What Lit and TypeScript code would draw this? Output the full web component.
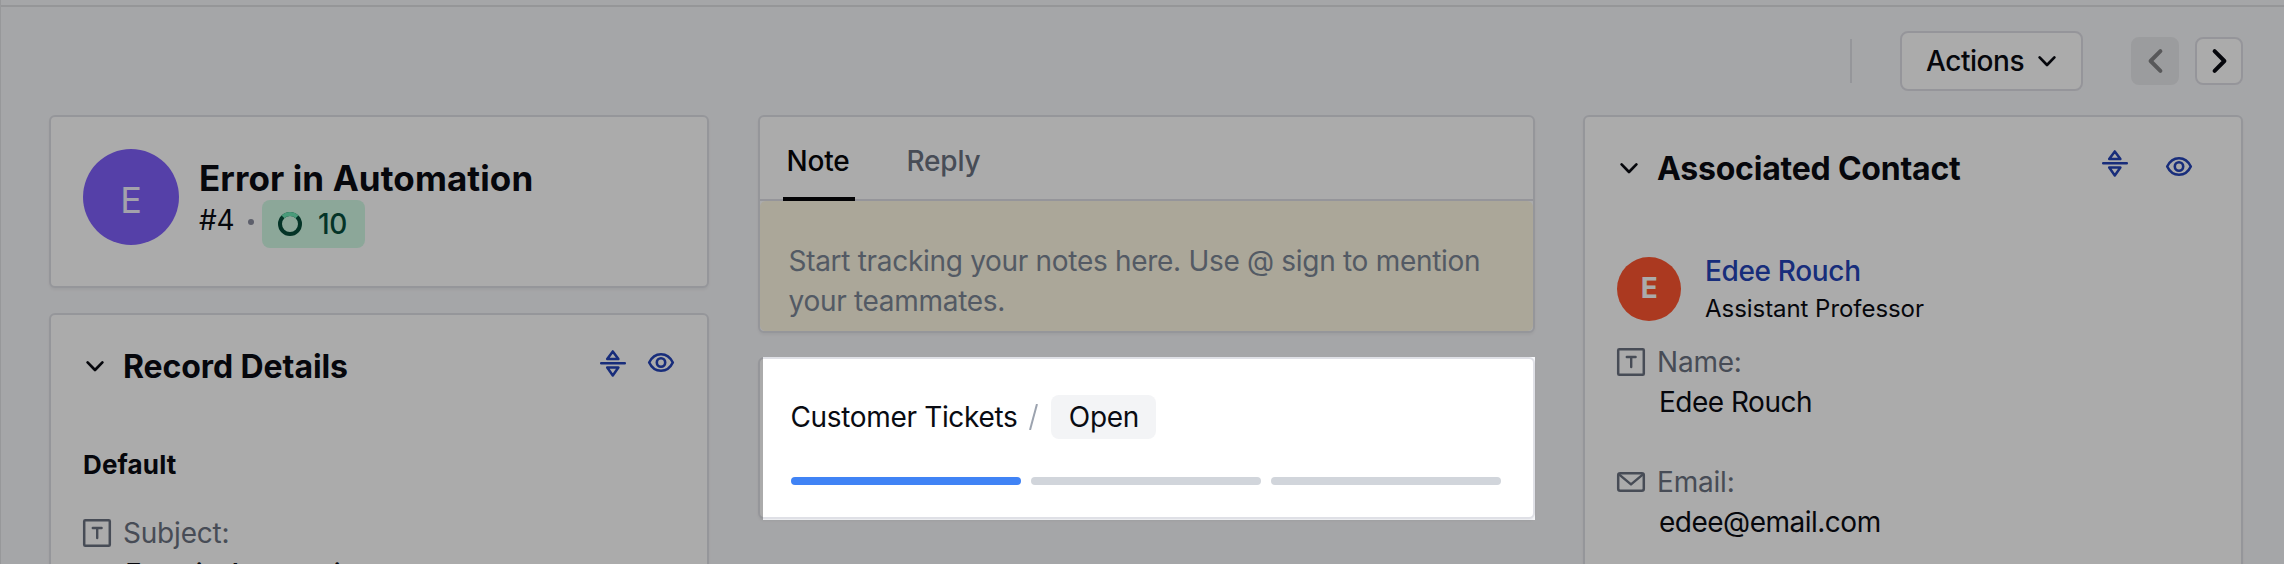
import { LitElement, html, css, svg } from "lit";
import { customElement, property } from "lit/decorators.js";

@customElement("ui-icon")
class UiIcon extends LitElement {
  @property() name = "";
  static styles = css`
    :host { display: block; flex: none; }
    svg { display: block; overflow: visible; fill: none; stroke: currentColor; stroke-linecap: round; stroke-linejoin: round; }
    .butt { stroke-linecap: butt; }
  `;
  render() {
    switch (this.name) {
      case "chevron":
        return html`<svg width="18" height="11" viewBox="0 0 18 11" stroke-width="2.7">${svg`<path d="M1.6 1.4 9 9l7.4-7.6"/>`}</svg>`;
      case "prev":
        return html`<svg width="15" height="24" viewBox="0 0 15 24" stroke-width="4">${svg`<path d="M12.4 2.2 2.6 12l9.8 9.8"/>`}</svg>`;
      case "next":
        return html`<svg width="15" height="24" viewBox="0 0 15 24" stroke-width="4">${svg`<path d="M2.6 2.2 12.4 12l-9.8 9.8"/>`}</svg>`;
      case "expand":
        return html`<svg width="26" height="27" viewBox="0 0 26 27" stroke-width="2.5">${svg`<path d="M1.2 13.3h23.6M12.8 1.4 18.4 9.1H7.2zM12.8 25.4 18.4 17.6H7.2z"/>`}</svg>`;
      case "eye":
        return html`<svg width="26" height="19" viewBox="0 0 26 19" stroke-width="2.6">${svg`<path d="M1.2 9.5C3.8 4 8.2 1.2 13 1.2S22.2 4 24.8 9.5C22.2 15 17.8 17.8 13 17.8S3.8 15 1.2 9.5z"/><circle cx="13" cy="9.5" r="4.2"/>`}</svg>`;
      case "text":
        return html`<svg width="28" height="28" viewBox="0 0 28 28" stroke-width="2.5"><rect x="1.2" y="1.2" width="25.6" height="25.6" rx="1"/><path d="M9.8 9h8.8M14.2 9v10" stroke-width="2.4"/></svg>`;
      case "mail":
        return html`<svg width="28" height="20" viewBox="0 0 28 20" stroke-width="2.5"><rect x="1.2" y="1.2" width="25.6" height="17.6" rx="2"/><path d="M2 2.4 14 12.4 26 2.4"/></svg>`;
      case "ring":
        return html`<svg class="butt" width="24" height="24" viewBox="0 0 24 24" stroke-width="4"><circle cx="12" cy="12" r="10" stroke="#064e3b"/><path d="M5 4.9A10 10 0 0 1 19 4.9" stroke="#6ee7b7"/></svg>`;
    }
    return html``;
  }
}

@customElement("app-root")
class AppRoot extends LitElement {
  static styles = css`
    :host { display: block; width: 2284px; height: 564px; overflow: hidden; position: relative; background: #f7f8fb;
      font: 400 28px/40px Inter, sans-serif; letter-spacing: -.34px; color: #090b12; }
    * { box-sizing: border-box; }
    .page { height: 564px; border-left: 1px solid #e2e3e6; overflow: hidden; }
    .strip { height: 7px; border-bottom: 2px solid #dfe0e3; }
    .toolbar { height: 108px; padding: 24px 41px 0 0; display: flex; justify-content: flex-end; align-items: flex-start; }
    .rule { width: 2px; height: 44px; margin: 8px 48px 0 0; background: #dfe0e6; }
    .btn { border: 2px solid #dfdfe6; border-radius: 8px; background: #fff; display: flex; align-items: center; }
    .actions { width: 183px; height: 60px; padding-left: 24px; gap: 14px; font-weight: 500; letter-spacing: -.45px; margin-right: 48px; }
    .actions ui-icon { padding-top: 1px; }
    .nav { width: 48px; height: 48px; margin-top: 6px; justify-content: center; }
    .off { background: #e8e9ec; border-color: #e8e9ec; color: #838486; margin-right: 16px; }
    .cols { display: grid; grid-template-columns: 660px 777px 660px; column-gap: 48.5px; padding-left: 48px; align-items: start; }
    .col { display: flex; flex-direction: column; gap: 24px; }
    .card { background: #fff; border: 2px solid #dfe0e6; border-radius: 6px; box-shadow: 0 2px 3px rgba(0, 0, 0, .05); }
    .summary { height: 173px; padding: 32px; display: flex; gap: 20px; }
    .avatar { flex: none; border-radius: 50%; display: flex; align-items: center; justify-content: center; color: #fff; }
    .big { width: 96px; height: 96px; background: #7f60fb; font-size: 36px; padding-top: 5px; color: #f4f2ff; }
    .title { font-size: 35px; font-weight: 700; letter-spacing: .1px; line-height: 40px; padding-top: 9px; height: 51px; white-space: nowrap; }
    .meta { display: flex; height: 48px; }
    .num { width: 49px; }
    .dot { width: 6px; height: 6px; border-radius: 3px; background: #8b8ea0; margin: 19px 8px 0 0; }
    .badge { width: 103px; height: 48px; border-radius: 8px; background: #d1fae5; color: #064e3b; font-weight: 500; display: flex; align-items: center; gap: 16px; padding-left: 16px; }
    .details { height: 420px; padding: 26px 32px; margin-top: 1px; }
    .head { display: flex; align-items: flex-start; height: 44px; }
    .head h2 { margin: 0; font-size: 32px; line-height: 52px; font-weight: 700; letter-spacing: -.22px; flex: 1; white-space: nowrap; }
    .details .head h2 { letter-spacing: -.08px; }
    .head .chev { margin: 20px 19px 0 3px; }
    .group { font-size: 26px; font-weight: 700; letter-spacing: .15px; line-height: 40px; margin-top: 60px; }
    .label { display: flex; align-items: center; gap: 12px; color: #6b7280; height: 40px; letter-spacing: -.2px; }
    .composer { height: 218px; overflow: hidden; }
    .tabs { height: 84px; display: flex; padding: 24px 0 0 23px; gap: 48px; font-weight: 500; letter-spacing: -.2px; border-bottom: 2px solid #dfdfe6; color: #6b7280; line-height: 40px; }
    .tab { height: 60px; padding: 0 4px; }
    .on { color: #06070a; border-bottom: 4px solid #06070a; width: 72px; }
    .editor { height: 130px; background: #fff9e4; border-radius: 6px; padding: 40px 29px 0; color: #7c8796; white-space: nowrap; letter-spacing: -.3px; }
    .stage { height: 162px; padding: 36px 32px 0 31px; }
    .crumb { display: flex; align-items: center; height: 44px; margin-bottom: 38px; }
    .slash { margin: 0 13px 0 12px; width: 9px; height: 26px; }
    .pill { background: #f3f4f6; border-radius: 8px; height: 44px; line-height: 44px; width: 105px; text-align: center; }
    .bars { display: grid; grid-template-columns: repeat(3, 230px); gap: 10px; }
    .bar { height: 8px; border-radius: 4px; background: #d1d5db; }
    .done { background: #4083f5; }
    .contact { height: 520px; padding: 26px 32px; }
    .person { display: flex; gap: 24px; margin-top: 70px; height: 85px; }
    .small { width: 64px; height: 64px; background: #ff5630; font-weight: 700; padding-bottom: 3px; }
    .name { color: #2443b8; font-weight: 500; line-height: 36px; margin-top: -4px; }
    .role { font-size: 24px; line-height: 40px; letter-spacing: -.05px; }
    .value { padding: 0 0 0 42px; height: 80px; letter-spacing: -.5px; }
    .details .value { padding-top: 1px; letter-spacing: -.4px; }
    .blue { color: #2443b8; }
    .x1 { margin: 9px 22px 0 0; }
    .e1 { margin: 12px 1px 0 0; }
    .x2 { margin: 7px 38px 0 0; }
    .e2 { margin: 14px 17px 0 0; }
    .subject { margin-top: 28px; }
    .spot { position: absolute; left: 763px; top: 357px; width: 772px; height: 163px; box-shadow: 0 0 0 2400px rgba(0, 0, 0, .33); }
  `;
  render() {
    return html`
      <div class="page">
        <div class="strip"></div>
        <div class="toolbar">
          <div class="rule"></div>
          <div class="btn actions"><span>Actions</span><ui-icon name="chevron"></ui-icon></div>
          <div class="btn nav off"><ui-icon name="prev"></ui-icon></div>
          <div class="btn nav"><ui-icon name="next"></ui-icon></div>
        </div>
        <div class="cols">
          <div class="col">
            <div class="card summary">
              <div class="avatar big">E</div>
              <div>
                <div class="title">Error in Automation</div>
                <div class="meta"><span class="num">#4</span><span class="dot"></span>
                  <div class="badge"><ui-icon name="ring"></ui-icon>10</div></div>
              </div>
            </div>
            <div class="card details">
              <div class="head"><ui-icon class="chev" name="chevron"></ui-icon><h2>Record Details</h2>
                <ui-icon class="blue x1" name="expand"></ui-icon>
                <ui-icon class="blue e1" name="eye"></ui-icon></div>
              <div class="group">Default</div>
              <div class="label subject"><ui-icon name="text"></ui-icon><span>Subject:</span></div>
              <div class="value">Error in Automation</div>
            </div>
          </div>
          <div class="col">
            <div class="card composer">
              <div class="tabs"><div class="tab on">Note</div><div class="tab">Reply</div></div>
              <div class="editor">Start tracking your notes here. Use @ sign to mention<br>your teammates.</div>
            </div>
            <div class="card stage">
              <div class="crumb"><span>Customer Tickets</span>
                <svg class="slash" viewBox="0 0 9 26"><path d="M8 0 1 26" stroke="#9ca3af" stroke-width="2"/></svg>
                <span class="pill">Open</span></div>
              <div class="bars"><div class="bar done"></div><div class="bar"></div><div class="bar"></div></div>
            </div>
          </div>
          <div class="card contact">
            <div class="head"><ui-icon class="chev" name="chevron"></ui-icon><h2>Associated Contact</h2>
              <ui-icon class="blue x2" name="expand"></ui-icon>
              <ui-icon class="blue e2" name="eye"></ui-icon></div>
            <div class="person"><div class="avatar small">E</div>
              <div><div class="name">Edee Rouch</div><div class="role">Assistant Professor</div></div></div>
            <div class="label"><ui-icon name="text"></ui-icon><span>Name:</span></div>
            <div class="value">Edee Rouch</div>
            <div class="label"><ui-icon name="mail"></ui-icon><span>Email:</span></div>
            <div class="value">edee@email.com</div>
          </div>
        </div>
      </div>
      <div class="spot"></div>
    `;
  }
}
